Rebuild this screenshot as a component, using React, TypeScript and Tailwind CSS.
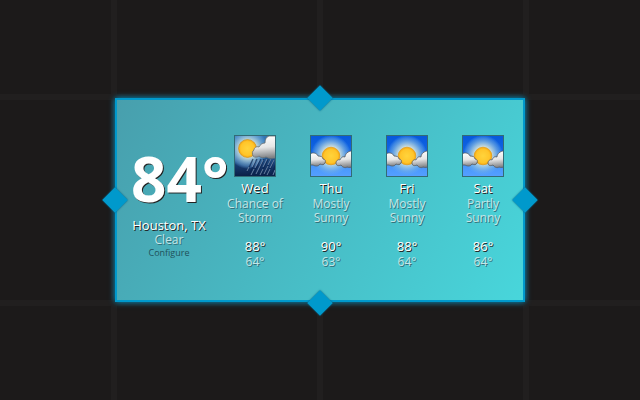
import React from "react";

type Forecast = {
  day: string;
  condition: string;
  high: number;
  low: number;
  storm?: boolean;
};

const forecast: Forecast[] = [
  { day: "Wed", condition: "Chance of Storm", high: 88, low: 64, storm: true },
  { day: "Thu", condition: "Mostly Sunny", high: 90, low: 63 },
  { day: "Fri", condition: "Mostly Sunny", high: 88, low: 64 },
  { day: "Sat", condition: "Partly Sunny", high: 86, low: 64 },
];

function WeatherIcon({ id, storm }: { id: string; storm?: boolean }) {
  const sky = `sky-${id}`;
  const glow = `glow-${id}`;
  const sun = `sun-${id}`;
  const cloud = `cloud-${id}`;
  return (
    <svg viewBox="0 0 40 40" className="size-[42px] border border-[#336b76]" aria-hidden="true">
      <defs>
        <linearGradient id={sky} x1="0" y1="0" x2="0" y2="1">
          <stop offset="0" stopColor={storm ? "#3377b4" : "#0759dc"} />
          <stop offset="0.5" stopColor={storm ? "#2c629b" : "#1668e4"} />
          <stop offset="0.72" stopColor={storm ? "#173c70" : "#4596fb"} />
          <stop offset="1" stopColor={storm ? "#0b2048" : "#559fff"} />
        </linearGradient>
        <radialGradient id={glow}>
          <stop offset="0.4" stopColor="#e8eed8" stopOpacity="0.9" />
          <stop offset="0.62" stopColor="#a5cde2" stopOpacity="0.75" />
          <stop offset="0.85" stopColor="#72b0e4" stopOpacity="0.45" />
          <stop offset="1" stopColor="#6cb2f5" stopOpacity="0" />
        </radialGradient>
        <radialGradient id={sun}>
          <stop offset="0" stopColor="#ffd43c" />
          <stop offset="0.75" stopColor="#ffc52a" />
          <stop offset="1" stopColor="#f7a80e" />
        </radialGradient>
        <linearGradient id={cloud} x1="0" y1="0" x2="0.1" y2="1">
          <stop offset="0" stopColor="#ffffff" />
          <stop offset="0.55" stopColor="#e6e6e6" />
          <stop offset="1" stopColor="#85878a" />
        </linearGradient>
      </defs>
      <rect width="40" height="40" fill={`url(#${sky})`} />
      {storm ? (
        <>
          <circle cx="13" cy="13" r="20" fill={`url(#${glow})`} />
          <circle cx="12.5" cy="12.5" r="9" fill={`url(#${sun})`} stroke="#c98a1a" strokeWidth="0.6" />
          <path
            d="M18 23L12 36M22 23L14 39M26 23L17 40M29 23L21 40M33 23L25 40M36 23L28 40M39 24L32 40M41 28L36 40"
            stroke="#0d2550"
            strokeWidth="1.4"
            opacity="0.7"
            fill="none"
          />
          <path
            d="M20 25L17 31M24 24L20 32M19 33L16 39M28 24L25 30M25 30L21 38M32 23L28 31M28 33L25 39M36 23L33 29M33 30L29 38M39 24L35 32M35 33L32 39M40 34L38 39M14 31L12 35"
            stroke="#8fa6c4"
            strokeWidth="0.7"
            fill="none"
          />
          <path
            d="M41 0H34C31 1 30 4 30 7C27 7 25 9 24 11C21 10 19 12 19 14C17 15 17 18 18 20C20 22 23 21 24 20C26 22 29 22 31 21C34 23 38 22 41 22Z"
            fill={`url(#${cloud})`}
            stroke="#6b6e70"
            strokeWidth="0.8"
          />
        </>
      ) : (
        <>
          <circle cx="20" cy="19" r="20" fill={`url(#${glow})`} />
          <circle cx="20" cy="20" r="8.8" fill={`url(#${sun})`} stroke="#e39a13" strokeWidth="0.7" />
          <path
            d="M-1 18C2 16 6 17 7 20C10 20 12 21 12 23C14 23 15 25 14 27C13 29 11 29 9 28C7 31 4 30 2 29L-1 29Z"
            fill={`url(#${cloud})`}
            stroke="#55595e"
            strokeWidth="0.8"
          />
          <path
            d="M41 15C37 15 34 18 34 21C31 20 30 22 29 24C27 23 25 25 25 27C25 30 28 30 30 29C32 32 35 32 36 31C38 32 40 31 41 31Z"
            fill={`url(#${cloud})`}
            stroke="#55595e"
            strokeWidth="0.8"
          />
        </>
      )}
    </svg>
  );
}

function Handle({ place, label }: { place: string; label: string }) {
  return (
    <button
      type="button"
      aria-label={label}
      className={`absolute size-[18px] rotate-45 bg-[#0099cc] shadow-[0_0_2px_#065f80] ${place}`}
    />
  );
}

export default function App() {
  return (
    <main
      className="flex min-h-screen items-center justify-center bg-[#1c1a1a] bg-[linear-gradient(90deg,#211f1f_6px,transparent_6px),linear-gradient(#211f1f_6px,transparent_6px)] bg-size-[206px_206px] bg-position-[calc(50vw-3px)_0,0_calc(50vh-106px)] font-['Open_Sans','Noto_Sans',sans-serif]"
    >
      <section
        aria-label="Weather"
        className="relative flex w-[410px] border-2 border-[#0099cc] bg-linear-[120deg] from-[#489fad] to-[#48d6db] pt-[35px] pr-[2px] pb-[31px] pl-[14px] text-center shadow-[0_0_6px_#0099cc]"
      >
        <div className="w-[76px] shrink-0 pt-[10px] text-[13px] leading-4 text-white">
          <p className="w-max text-left text-[62px] leading-[66px] font-bold text-shadow-[1px_1px_0_#222]">84°</p>
          <p className="mt-[6px] whitespace-nowrap text-shadow-[1px_1px_0_#222]">Houston, TX</p>
          <p className="text-[12px] leading-[14px] text-[#c4e5e8] text-shadow-[1px_1px_0_#34737c]">Clear</p>
          <button type="button" className="block w-full text-[9px] leading-3 text-[#20515a]">
            Configure
          </button>
        </div>
        <div className="ml-[10px] grid grow grid-cols-4">
          {forecast.map((f) => (
            <article key={f.day} className="flex flex-col items-center">
              <WeatherIcon id={f.day} storm={f.storm} />
              <h2 className="mt-[3px] text-[13px] leading-4 text-white text-shadow-[1px_1px_0_#222]">{f.day}</h2>
              <p className="mt-px h-[41px] w-[64px] text-[12px] leading-[14px] text-[#c4e5e8] text-shadow-[1px_1px_0_#34737c]">
                {f.condition}
              </p>
              <p className="text-[13px] leading-4 text-white text-shadow-[1px_1px_0_#222]">{f.high}°</p>
              <p className="mt-px text-[12px] leading-[14px] text-[#c4e5e8] text-shadow-[1px_1px_0_#34737c]">{f.low}°</p>
            </article>
          ))}
        </div>
        <Handle label="Resize top" place="-top-[11px] left-1/2 -translate-x-1/2" />
        <Handle label="Resize bottom" place="-bottom-[12px] left-1/2 -translate-x-1/2" />
        <Handle label="Resize left" place="top-1/2 -left-[11px] -translate-y-1/2" />
        <Handle label="Resize right" place="top-1/2 -right-[11px] -translate-y-1/2" />
      </section>
    </main>
  );
}
